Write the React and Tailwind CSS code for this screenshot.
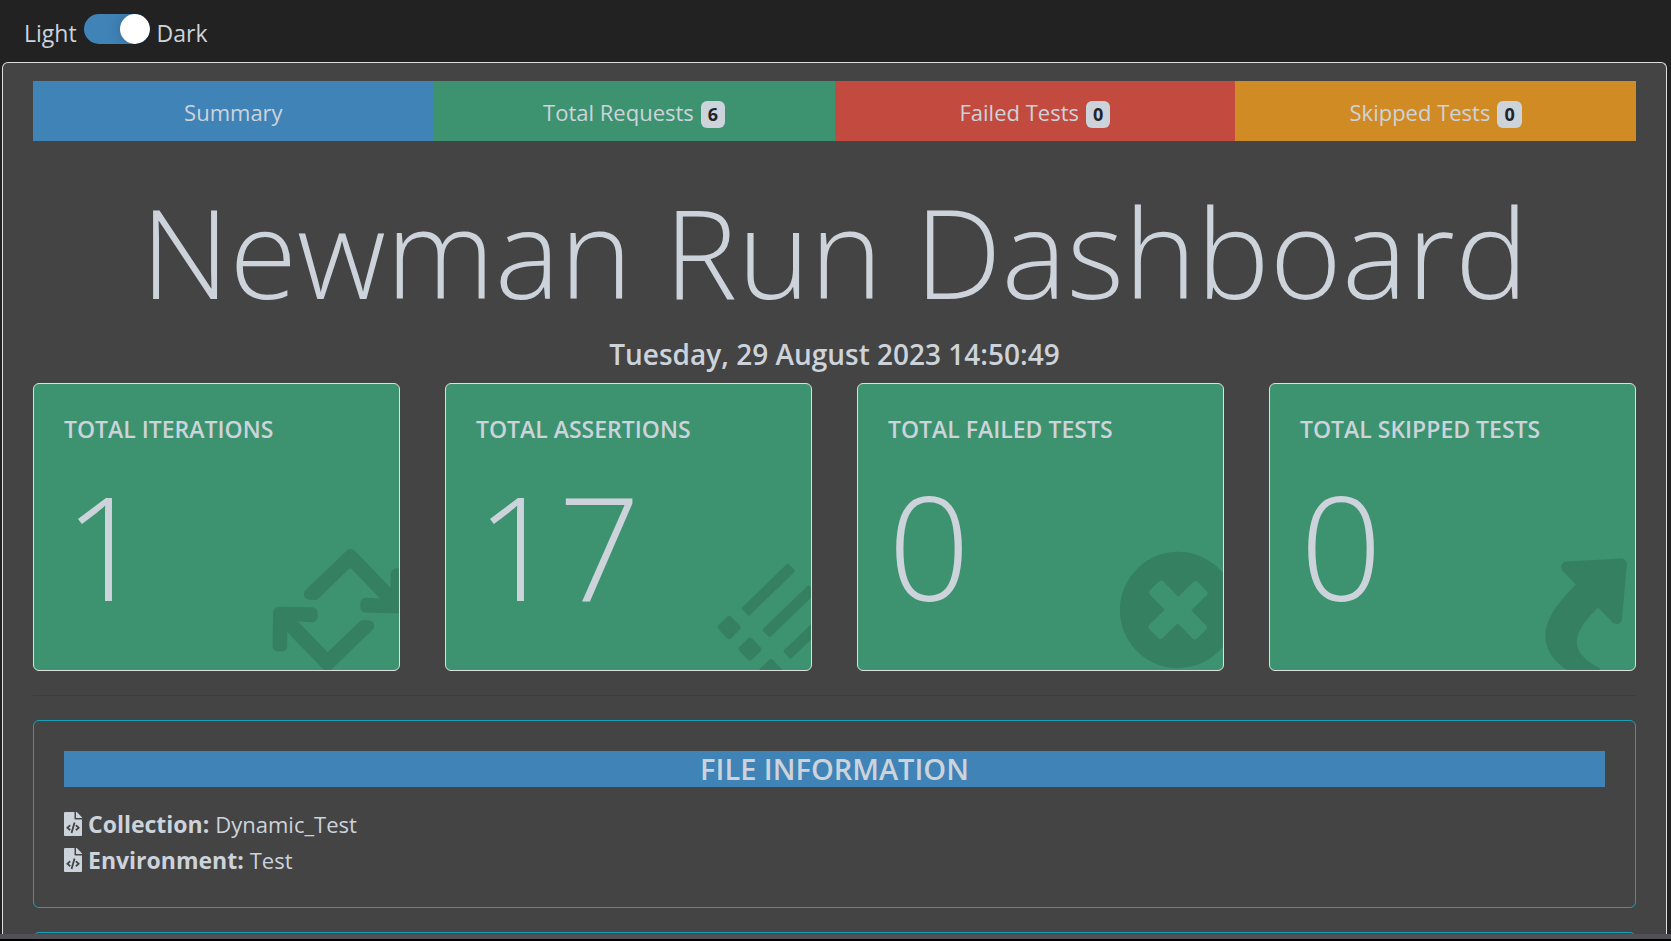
import React, { useState } from "react";
import { FaRetweet, FaPlusCircle, FaShare, FaFileCode } from "react-icons/fa";

function ListIcon({ className }) {
  return (
    <svg viewBox="0 0 96 96" fill="currentColor" className={className} aria-hidden="true">
      {[9, 39, 69].map((y) => (
        <g key={y}>
          <rect x="0" y={y} width="18" height="18" rx="3" />
          <rect x="31" y={y + 3.5} width="65" height="11" rx="2" />
        </g>
      ))}
    </svg>
  );
}

const tabs = [
  { label: "Summary", color: "bg-[#4083b7]" },
  { label: "Total Requests", count: 6, color: "bg-[#3d9370]" },
  { label: "Failed Tests", count: 0, color: "bg-[#c24a3f]" },
  { label: "Skipped Tests", count: 0, color: "bg-[#d18b24]" },
];

const stats = [
  { title: "Total Iterations", value: 1, Icon: FaRetweet, size: "h-[120px] w-[150px]" },
  { title: "Total Assertions", value: 17, Icon: ListIcon, size: "h-24 w-24" },
  { title: "Total Failed Tests", value: 0, Icon: FaPlusCircle, size: "h-[120px] w-[120px]" },
  { title: "Total Skipped Tests", value: 0, Icon: FaShare, size: "h-[120px] w-[120px]" },
];

const files = [
  { label: "Collection:", value: "Dynamic_Test" },
  { label: "Environment:", value: "Test" },
];

function ThemeSwitch() {
  const [dark, setDark] = useState(true);
  return (
    <label className="flex items-center px-6 pt-[14px] pb-[9px] text-[23px] leading-9">
      <span>Light</span>
      <input
        type="checkbox"
        role="switch"
        aria-label="Dark theme"
        checked={dark}
        onChange={(e) => setDark(e.target.checked)}
        className="mx-[7px] mb-2 h-[30px] w-[66px] shrink-0 cursor-pointer appearance-none overflow-hidden rounded-full bg-[#777] before:block before:h-[30px] before:w-[30px] before:rounded-full before:bg-white before:shadow-[0_0_15px_rgba(0,0,0,0.2)] checked:bg-[#4083b7] checked:before:ml-9"
      />
      <span>Dark</span>
    </label>
  );
}

function StatCard({ title, value, Icon, size }) {
  return (
    <section className="relative overflow-hidden rounded-md border border-[#dfdfdf] bg-[#3d9370] px-[30px] pt-[30px] pb-[38px]">
      <Icon className={"absolute right-[-15px] bottom-0 max-w-none -rotate-44 text-[#141414]/15 " + size} />
      <h2 className="text-[23px] leading-[30px] font-semibold whitespace-nowrap uppercase">{title}</h2>
      <p className="mt-[14px] text-[144px] leading-[174px] font-light">{value}</p>
    </section>
  );
}

export default function App() {
  return (
    <div className="flex h-screen flex-col overflow-hidden bg-[#222] font-['Open_Sans','Noto_Sans',sans-serif] text-[22px] text-[#cdd3db]">
      <div className="min-h-0 flex-1 overflow-hidden">
        <ThemeSwitch />
        <main className="mt-px mr-1 ml-0.5 rounded-t-md border border-b-0 border-[#dfdfdf] bg-[#444] px-[30px] pt-[18px] pb-6">
          <nav className="grid grid-cols-4">
            {tabs.map(({ label, count, color }) => (
              <a key={label} href="#" className={"flex h-[60px] items-center justify-center gap-[7px] pt-0.5 " + color}>
                {label}
                {count !== undefined && (
                  <span className="mt-1 rounded-md bg-[#cdd3db] px-[7px] text-[18px] leading-[27px] font-bold text-[#212529]">
                    {count}
                  </span>
                )}
              </a>
            ))}
          </nav>
          <header className="text-center">
            <h1 className="pt-[33px] pb-1.5 text-[123px] leading-[156px] font-light whitespace-nowrap">
              Newman Run Dashboard
            </h1>
            <p className="text-[28px] leading-9 font-semibold">Tuesday, 29 August 2023 14:50:49</p>
          </header>
          <div className="mt-[11px] grid grid-cols-4 gap-[45px]">
            {stats.map((s) => (
              <StatCard key={s.title} {...s} />
            ))}
          </div>
          <hr className="my-6 border-[#3c3c3c]" />
          <section className="rounded-md border border-[#17a2b8] px-[30px] pt-[30px] pb-[29px]">
            <h2 className="bg-[#4083b7] text-center text-[29px] leading-9 font-semibold uppercase">
              File Information
            </h2>
            <ul className="mt-[19px]">
              {files.map(({ label, value }) => (
                <li key={label} className="flex items-center leading-9">
                  <FaFileCode className="mr-1.5 h-6 w-[18px]" aria-hidden="true" />
                  <strong className="mr-1.5 text-[23px]">{label}</strong>
                  {value}
                </li>
              ))}
            </ul>
          </section>
          <section className="mt-6 h-48 rounded-md border border-[#17a2b8]" />
        </main>
      </div>
      <div className="h-[7px] shrink-0 border-b-2 border-black bg-[#505056]" />
    </div>
  );
}
